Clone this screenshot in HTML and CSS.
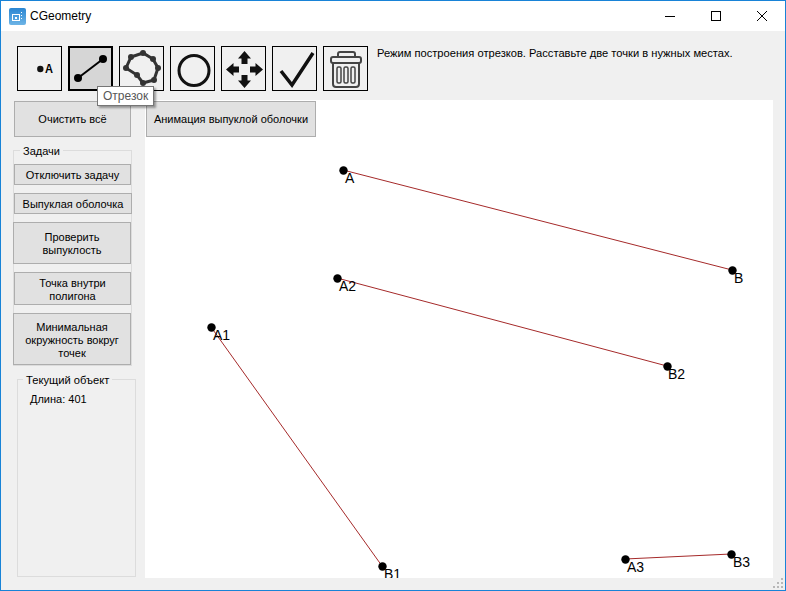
FILE: index.html
```html
<!DOCTYPE html>
<html>
<head>
    <title>CGeometry</title>
    <link rel="stylesheet" href="styles.css">
</head>
<body>
    <div id="window">
        <div id="titlebar">
            <svg class="app-icon" width="17" height="17" viewBox="0 0 17 17">
                <defs>
                    <linearGradient id="iconFill" x1="0" y1="0" x2="0" y2="1">
                        <stop offset="0" stop-color="#2a86d2"/>
                        <stop offset="1" stop-color="#6db4e6"/>
                    </linearGradient>
                </defs>
                <rect width="17" height="17" rx="2" fill="url(#iconFill)"/>
                <rect x="3.500" y="6.500" width="7" height="6" fill="none" stroke="#fff"/>
                <rect x="6" y="9" width="2" height="2" fill="#fff"/>
                <path d="M12.500 4v1M12.500 7v1M12.500 10v1" stroke="#fff"/>
            </svg>
            <span class="app-name">CGeometry</span>
            <div class="caption-buttons">
                <svg class="caption" width="10" height="10" viewBox="0 0 10 10"><path d="M0 5.500h10" stroke="#000"/></svg>
                <svg class="caption" width="10" height="10" viewBox="0 0 10 10"><rect x="0.500" y="0.500" width="9" height="9" fill="none" stroke="#000"/></svg>
                <svg class="caption" width="10" height="10" viewBox="0 0 10 10"><path d="M0 0l10 10M10 0L0 10" stroke="#000"/></svg>
            </div>
        </div>

        <div id="content">
            <div id="toolbar">
                <button class="tool">
                    <svg width="43" height="43" viewBox="0 0 43 43">
                        <circle cx="22.300" cy="22" r="3.200" fill="#111"/>
                        <text transform="translate(27 25.500) scale(0.85 1)" class="tool-letter">A</text>
                    </svg>
                </button>
                <button class="tool tool-active">
                    <svg width="41" height="41" viewBox="0 0 41 41">
                        <path d="M8 30L33 11" stroke="#000" stroke-width="2"/>
                        <circle cx="8" cy="30" r="4" fill="#000"/>
                        <circle cx="33" cy="11" r="4" fill="#000"/>
                    </svg>
                </button>
                <button class="tool">
                    <svg width="43" height="43" viewBox="0 0 43 43">
                        <path d="M6 21L11 10L23 6L33 12L38 21L34 33L23 36L17 28Z" fill="none" stroke="#333" stroke-width="3"/>
                        <g fill="#333">
                            <circle cx="6" cy="21" r="3"/><circle cx="11" cy="10" r="3"/>
                            <circle cx="23" cy="6" r="3"/><circle cx="33" cy="12" r="3"/>
                            <circle cx="38" cy="21" r="3"/><circle cx="34" cy="33" r="3"/>
                            <circle cx="23" cy="36" r="3"/><circle cx="17" cy="28" r="3"/>
                        </g>
                    </svg>
                </button>
                <button class="tool">
                    <svg width="43" height="43" viewBox="0 0 43 43">
                        <circle cx="23" cy="23.500" r="15" fill="none" stroke="#111" stroke-width="3"/>
                    </svg>
                </button>
                <button class="tool">
                    <svg width="43" height="43" viewBox="0 0 43 43">
                        <g fill="#111">
                            <path d="M22.500 4L29 11.500H25.500V17H19.500V11.500H16Z"/>
                            <path d="M22.500 4L29 11.500H25.500V17H19.500V11.500H16Z" transform="rotate(90 22.500 22.500)"/>
                            <path d="M22.500 4L29 11.500H25.500V17H19.500V11.500H16Z" transform="rotate(180 22.500 22.500)"/>
                            <path d="M22.500 4L29 11.500H25.500V17H19.500V11.500H16Z" transform="rotate(270 22.500 22.500)"/>
                        </g>
                    </svg>
                </button>
                <button class="tool">
                    <svg width="43" height="43" viewBox="0 0 43 43">
                        <path d="M8 24L19 38L40 6" fill="none" stroke="#111" stroke-width="3.500"/>
                    </svg>
                </button>
                <button class="tool">
                    <svg width="43" height="43" viewBox="0 0 43 43">
                        <g fill="none" stroke="#444" stroke-width="2">
                            <path d="M14 10V7Q14 5 16 5H29Q31 5 31 7V10"/>
                            <rect x="7" y="10" width="30" height="6" rx="2"/>
                            <path d="M9 16V37Q9 40 12 40H32Q35 40 35 37V16"/>
                            <rect x="13" y="20" width="4" height="16" rx="1.500" stroke-width="1.500"/>
                            <rect x="20" y="20" width="4" height="16" rx="1.500" stroke-width="1.500"/>
                            <rect x="27" y="20" width="4" height="16" rx="1.500" stroke-width="1.500"/>
                        </g>
                    </svg>
                </button>
                <div id="hint">Режим построения отрезков. Расставьте две точки в нужных местах.</div>
            </div>

            <div id="main">
                <div id="sidebar">
                    <button class="btn btn-clear">Очистить всё</button>
                    <div class="group group-tasks">
                        <span class="group-title">Задачи</span>
                        <button class="btn task-off">Отключить задачу</button>
                        <button class="btn task-hull">Выпуклая оболочка</button>
                        <button class="btn task-check">Проверить<br>выпуклость</button>
                        <button class="btn task-inside">Точка внутри<br>полигона</button>
                        <button class="btn task-circle">Минимальная<br>окружность вокруг<br>точек</button>
                    </div>
                    <div class="group group-object">
                        <span class="group-title">Текущий объект</span>
                        <div class="object-info">Длина: 401</div>
                    </div>
                </div>

                <div id="canvas">
                    <button class="btn btn-anim">Анимация выпуклой оболочки</button>
                    <svg width="628" height="478" viewBox="145 100 628 478">
                        <g stroke="#a52a2a" stroke-width="1">
                            <line x1="343" y1="170" x2="732" y2="270"/>
                            <line x1="337" y1="278" x2="667" y2="366"/>
                            <line x1="211" y1="327" x2="382" y2="566"/>
                            <line x1="625" y1="559" x2="731" y2="554"/>
                        </g>
                        <g fill="#000">
                            <circle cx="343.500" cy="170.500" r="4.200"/>
                            <circle cx="732.500" cy="270.500" r="4.200"/>
                            <circle cx="337.500" cy="278.500" r="4.200"/>
                            <circle cx="667.500" cy="366.500" r="4.200"/>
                            <circle cx="211.500" cy="327.500" r="4.200"/>
                            <circle cx="382.500" cy="566.500" r="4.200"/>
                            <circle cx="625.500" cy="559.500" r="4.200"/>
                            <circle cx="731.500" cy="554.500" r="4.200"/>
                        </g>
                        <g class="point-label">
                            <text x="345" y="183">A</text>
                            <text x="734" y="283">B</text>
                            <text x="339" y="291">A2</text>
                            <text x="668" y="379">B2</text>
                            <text x="213" y="340">A1</text>
                            <text x="384" y="579">B1</text>
                            <text x="627" y="572">A3</text>
                            <text x="733" y="567">B3</text>
                        </g>
                    </svg>
                </div>
            </div>
        </div>
        <svg class="grip" width="12" height="12" viewBox="0 0 12 12" fill="#b8b8b8">
            <rect x="8" y="0" width="2" height="2"/>
            <rect x="4" y="4" width="2" height="2"/><rect x="8" y="4" width="2" height="2"/>
            <rect x="0" y="8" width="2" height="2"/><rect x="4" y="8" width="2" height="2"/><rect x="8" y="8" width="2" height="2"/>
        </svg>
        <div id="tooltip">Отрезок</div>
    </div>
</body>
</html>
```

FILE: styles.css
```css
* {
  box-sizing: border-box;
}

html, body {
  margin: 0;
  height: 100%;
}

body {
  font-family: "Liberation Sans", Arial, sans-serif;
  font-size: 11px;
  color: #000;
}

#window {
  position: relative;
  width: 786px;
  height: 591px;
  border: 1px solid #1883d7;
  display: flex;
  flex-direction: column;
  overflow: hidden;
}

#titlebar {
  height: 30px;
  background-color: #fff;
  display: flex;
  align-items: center;
  padding-left: 8px;
}

.app-name {
  margin-left: 4px;
  font-size: 12px;
}

.caption-buttons {
  margin-left: auto;
  margin-right: 18px;
  display: flex;
  gap: 36px;
}

#content {
  flex: 1;
  background-color: #f0f0f0;
  padding: 15px 12px 12px 12px;
  display: flex;
  flex-direction: column;
}

#toolbar {
  display: flex;
  gap: 6px;
  padding-left: 4px;
  height: 54px;
}

.tool {
  width: 45px;
  height: 45px;
  padding: 0;
  border: 1px solid #000;
  background-color: #f0f0f0;
  display: flex;
  align-items: center;
  justify-content: center;
}

.tool-active {
  border: 2px solid #000;
  background-color: #d6d6d6;
}

.tool-letter {
  font-size: 13px;
  font-weight: bold;
  font-family: "Liberation Sans", sans-serif;
}

#hint {
  margin-left: 3px;
  font-size: 11.15px;
  line-height: 14px;
}

#main {
  flex: 1;
  display: flex;
  min-height: 0;
}

#sidebar {
  width: 132px;
  display: flex;
  flex-direction: column;
}

.btn {
  font-family: "Liberation Sans", Arial, sans-serif;
  font-size: 11px;
  line-height: 13px;
  padding: 1px 0 0 0;
  color: #000;
  background-color: #e1e1e1;
  border: 1px solid #adadad;
  white-space: nowrap;
}

.btn-clear {
  width: 117px;
  height: 36px;
  margin: 1px 0 0 1px;
}

.group {
  position: relative;
  border: 1px solid #dcdcdc;
}

.group-title {
  position: absolute;
  top: -7px;
  background-color: #f0f0f0;
  padding: 0 3px;
  line-height: 14px;
}

.group-tasks {
  width: 119px;
  height: 216px;
  margin-top: 13px;
  padding-top: 13px;
  display: flex;
  flex-direction: column;
  gap: 8px;
}

.group-tasks .btn {
  padding-top: 3px;
}

.group-tasks .group-title {
  left: 6px;
}

.task-off {
  width: 117px;
  height: 21px;
}

.task-hull {
  width: 118px;
  height: 21px;
}

.task-check {
  width: 118px;
  height: 42px;
  margin-left: -1px;
}

.task-inside {
  width: 117px;
  height: 34px;
}

.task-circle {
  width: 118px;
  height: 52px;
  margin-left: -1px;
}

.group-object {
  width: 119px;
  height: 198px;
  margin: 13px 0 0 4px;
}

.group-object .group-title {
  left: 5px;
  font-size: 11.2px;
}

.object-info {
  margin: 13px 0 0 12px;
}

#canvas {
  position: relative;
  width: 628px;
  height: 478px;
  margin-left: 1px;
  background-color: #fff;
}

#canvas svg {
  display: block;
}

.btn-anim {
  position: absolute;
  left: 1px;
  top: 1px;
  width: 170px;
  height: 36px;
}

.point-label text {
  font-size: 14px;
  fill: #000;
}

.grip {
  position: absolute;
  right: 0;
  bottom: 0;
}

#tooltip {
  position: absolute;
  left: 96px;
  top: 85px;
  height: 20px;
  padding: 0 5px;
  font-size: 12px;
  line-height: 18px;
  background-color: #fff;
  border: 1px solid #767676;
  color: #575757;
  box-shadow: 2px 2px 2px rgba(0, 0, 0, 0.35);
}
```
